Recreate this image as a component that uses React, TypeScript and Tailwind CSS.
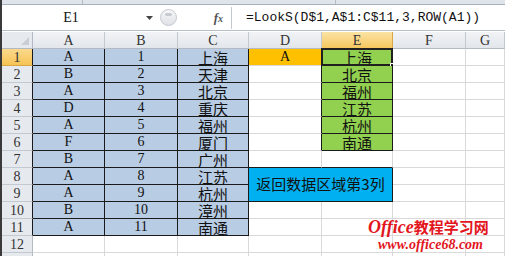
import React from "react";

const mono = { fontFamily: '"Liberation Mono", "DejaVu Sans Mono", monospace' };
const serif = { fontFamily: '"Liberation Serif", "DejaVu Serif", serif' };
const cjk = { fontFamily: '"Noto Sans CJK SC", "Noto Sans", sans-serif' };

const colA = ["A", "B", "A", "D", "A", "F", "B", "A", "A", "B", "A"];
const colC = ["上海", "天津", "北京", "重庆", "福州", "厦门", "广州", "江苏", "杭州", "漳州", "南通"];
const colE = ["上海", "北京", "福州", "江苏", "杭州", "南通"];
const letters = ["A", "B", "C", "D", "E", "F", "G"];

// cells that carry the dark outline (data range, result column, note box)
function dark(r: number, c: number) {
  if (r >= 1 && r <= 11 && c >= 1 && c <= 3) return true;
  if (r >= 1 && r <= 6 && c === 5) return true;
  if (r >= 8 && r <= 9 && c >= 4 && c <= 5) return true;
  return false;
}

function Cell({ r, c }: { r: number; c: number }) {
  const right = dark(r, c) || dark(r, c + 1) ? "border-r border-r-[#1a1a1a]" : "border-r border-r-[#d9d9d9]";
  const bottom = dark(r, c) || dark(r + 1, c) ? "border-b border-b-[#1a1a1a]" : "border-b border-b-[#d9d9d9]";
  let bg = "bg-white";
  let text: React.ReactNode = null;
  let font = serif;
  if (c >= 1 && c <= 3 && r <= 11) bg = "bg-[#b8cce4]";
  if (c === 1 && r <= 11) text = colA[r - 1];
  if (c === 2 && r <= 11) text = String(r);
  if (c === 3 && r <= 11) {
    text = colC[r - 1];
    font = cjk;
  }
  if (c === 4 && r === 1) {
    bg = "bg-[#ffc000]";
    text = "A";
  }
  if (c === 5 && r <= 6) {
    bg = "bg-[#92d050]";
    text = colE[r - 1];
    font = cjk;
  }
  const isCjk = font === cjk;
  return (
    <div
      className={`relative flex items-center justify-center overflow-visible ${bg} ${right} ${bottom} ${isCjk ? "text-[15px]" : "text-[14px]"} text-[#111] leading-none`}
      style={font}
    >
      {text}
      {c === 5 && r === 1 && (
        <>
          <div className="absolute -left-px -top-px -right-px -bottom-px border-2 border-[#202020]" />
          <div className="absolute -right-[3px] -bottom-[3px] w-[5px] h-[5px] bg-[#202020] border border-white" />
        </>
      )}
    </div>
  );
}

export default function App() {
  const rows = Array.from({ length: 13 }, (_, i) => i + 1);
  return (
    <div className="relative w-[505px] h-[256px] overflow-hidden bg-white border-l-2 border-l-[#3a3a3a]">
      {/* ribbon edge */}
      <div className="flex h-[5px] bg-[#dfe4ea] border-b border-b-[#a9b1bb]">
        <div className="w-[81px] border-r border-r-[#b4bcc6]" />
        <div className="w-[253px] border-r border-r-[#b4bcc6]" />
      </div>

      {/* formula bar */}
      <div className="flex h-[26px] items-center bg-white border-b border-b-[#b7bec8]">
        <div className="w-[138px] text-center text-[14px] text-[#111]" style={serif}>
          E1
        </div>
        <div className="w-[18px] flex justify-center">
          <svg width="7" height="4" viewBox="0 0 7 4">
            <path d="M0 0h7L3.5 4z" fill="#444" />
          </svg>
        </div>
        <div className="ml-[2px] w-[17px] h-[17px] rounded-full border border-[#c3c8cf] bg-gradient-to-b from-[#f6f7f9] to-[#dfe2e6] flex items-start justify-center">
          <div className="mt-[3px] w-[7px] h-[3px] rounded-full bg-[#c8ccd2]" />
        </div>
        <div className="w-[48px] text-right pr-[2px] text-[13px] italic font-bold text-[#555]" style={serif}>
          f<span className="text-[10px]">x</span>
        </div>
        <div className="ml-[6px] h-[22px] border-l border-l-[#c3c8cf]" />
        <div className="ml-[14px] text-[13px] text-[#111] whitespace-nowrap" style={mono}>
          =LookS(D$1,A$1:C$11,3,ROW(A1))
        </div>
      </div>

      {/* sheet grid */}
      <div className="grid grid-cols-[31px_72px_73px_71px_73px_71px_73px_1fr] auto-rows-[17px] mt-px">
        <div className="bg-[#e6e9ee] border-r border-r-[#b3bac4] border-b border-b-[#b3bac4] flex items-end justify-end p-[3px]">
          <svg width="8" height="8" viewBox="0 0 8 8">
            <path d="M8 0v8H0z" fill="#c9ced5" />
          </svg>
        </div>
        {letters.map((l) => (
          <div
            key={l}
            className={`flex items-center justify-center text-[14px] text-[#333] border-r border-b ${
              l === "E"
                ? "bg-gradient-to-b from-[#fbe3a4] to-[#f5c75c] border-r-[#d9a845] border-b-[#d9a845]"
                : "bg-gradient-to-b from-[#f1f3f6] to-[#e2e6eb] border-r-[#c3c9d1] border-b-[#b3bac4]"
            }`}
            style={serif}
          >
            {l}
          </div>
        ))}
        {rows.map((r) => (
          <React.Fragment key={r}>
            <div
              className={`flex items-center justify-center text-[14px] text-[#333] border-b border-r ${
                r === 1 ? "bg-gradient-to-b from-[#fbd98c] to-[#f6c453] border-b-[#d9a845]" : "bg-[#e6e9ee] border-b-[#c3c9d1]"
              } ${r <= 11 ? "border-r-[#1a1a1a]" : "border-r-[#b3bac4]"}`}
              style={serif}
            >
              {r <= 12 ? r : null}
            </div>
            {[1, 2, 3, 4, 5, 6, 7].map((c) => {
              if (r === 8 && c === 4)
                return (
                  <div
                    key={c}
                    className="col-span-2 row-span-2 flex items-center justify-center bg-[#00b0f0] border-r border-b border-[#1a1a1a] text-[15px] text-[#111]"
                    style={cjk}
                  >
                    返回数据区域第3列
                  </div>
                );
              if ((r === 8 && c === 5) || (r === 9 && (c === 4 || c === 5))) return null;
              return <Cell key={c} r={r} c={c} />;
            })}
          </React.Fragment>
        ))}
      </div>

      {/* watermark */}
      <div
        className="absolute left-[366px] top-[218px] text-[#e3161e] italic font-bold leading-none"
        style={{ fontFamily: '"Liberation Serif", "Noto Sans CJK SC", serif' }}
      >
        <div className="text-[18px] whitespace-nowrap">
          Office<span className="not-italic text-[15px]" style={cjk}>教程学习网</span>
        </div>
        <div className="mt-[2px] ml-[10px] text-[14px] whitespace-nowrap">www.office68.com</div>
      </div>
    </div>
  );
}
